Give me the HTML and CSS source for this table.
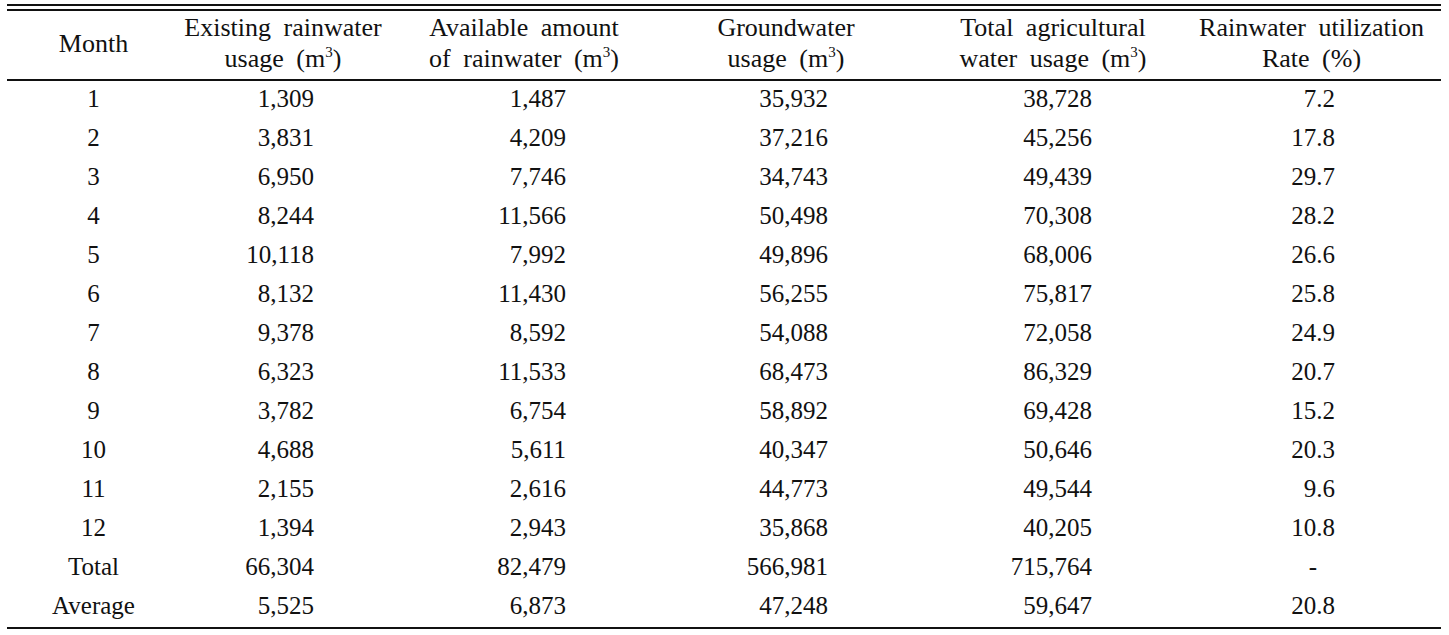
FILE: index.html
```html
<!DOCTYPE html>
<html lang="en">
<head>
<meta charset="utf-8">
<title>Monthly rainwater and groundwater usage</title>
<link rel="stylesheet" href="styles.css">
</head>
<body>
<div class="sheet">
<table class="data">
  <colgroup>
    <col class="c1"><col class="c2"><col class="c3"><col class="c4"><col class="c5"><col class="c6">
  </colgroup>
  <thead>
    <tr>
      <th>Month</th>
      <th>Existing rainwater<br>usage (m<sup>3</sup>)</th>
      <th>Available amount<br>of rainwater (m<sup>3</sup>)</th>
      <th>Groundwater<br>usage (m<sup>3</sup>)</th>
      <th>Total agricultural<br>water usage (m<sup>3</sup>)</th>
      <th class="h6">Rainwater utilization<br>Rate (%)</th>
    </tr>
  </thead>
  <tbody>
    <tr><td>1</td><td>1,309</td><td>1,487</td><td>35,932</td><td>38,728</td><td>7.2</td></tr>
    <tr><td>2</td><td>3,831</td><td>4,209</td><td>37,216</td><td>45,256</td><td>17.8</td></tr>
    <tr><td>3</td><td>6,950</td><td>7,746</td><td>34,743</td><td>49,439</td><td>29.7</td></tr>
    <tr><td>4</td><td>8,244</td><td>11,566</td><td>50,498</td><td>70,308</td><td>28.2</td></tr>
    <tr><td>5</td><td>10,118</td><td>7,992</td><td>49,896</td><td>68,006</td><td>26.6</td></tr>
    <tr><td>6</td><td>8,132</td><td>11,430</td><td>56,255</td><td>75,817</td><td>25.8</td></tr>
    <tr><td>7</td><td>9,378</td><td>8,592</td><td>54,088</td><td>72,058</td><td>24.9</td></tr>
    <tr><td>8</td><td>6,323</td><td>11,533</td><td>68,473</td><td>86,329</td><td>20.7</td></tr>
    <tr><td>9</td><td>3,782</td><td>6,754</td><td>58,892</td><td>69,428</td><td>15.2</td></tr>
    <tr><td>10</td><td>4,688</td><td>5,611</td><td>40,347</td><td>50,646</td><td>20.3</td></tr>
    <tr><td>11</td><td>2,155</td><td>2,616</td><td>44,773</td><td>49,544</td><td>9.6</td></tr>
    <tr><td>12</td><td>1,394</td><td>2,943</td><td>35,868</td><td>40,205</td><td>10.8</td></tr>
    <tr><td>Total</td><td>66,304</td><td>82,479</td><td>566,981</td><td>715,764</td><td class="dash">-</td></tr>
    <tr class="last"><td>Average</td><td>5,525</td><td>6,873</td><td>47,248</td><td>59,647</td><td>20.8</td></tr>
  </tbody>
</table>
</div>
</body>
</html>
```
FILE: styles.css
```css
html, body {
  margin: 0;
  padding: 0;
  background: #ffffff;
}

.sheet {
  margin: 4px 0 0 7px;
  width: 1434px;
  border-top: 2px solid #111;
  padding-top: 3px;
}

.data {
  width: 1434px;
  table-layout: fixed;
  border-collapse: separate;
  border-spacing: 0;
  border-top: 2px solid #111;
  font-family: "Liberation Serif", "Times New Roman", serif;
  font-size: 25px;
  color: #111;
}

.c1 { width: 173px; }
.c2 { width: 206px; }
.c3 { width: 276px; }
.c4 { width: 248px; }
.c5 { width: 286px; }
.c6 { width: 245px; }

.data th {
  font-weight: normal;
  font-size: 26px;
  line-height: 31px;
  height: 64px;
  padding: 0 0 4px 0;
  text-align: center;
  vertical-align: middle;
  word-spacing: 6px;
  border-bottom: 2px solid #111;
}

.data th.h6 {
  padding-right: 14px;
}

.data sup {
  font-size: 15px;
  line-height: 0;
  vertical-align: 10px;
}

.data tbody tr {
  height: 39px;
}

.data td {
  padding: 0 0 3px 0;
  height: 36px;
  line-height: 30px;
  text-align: right;
  vertical-align: middle;
  white-space: nowrap;
}

.data td:nth-child(1) { text-align: center; }
.data td:nth-child(2) { padding-right: 72px; }
.data td:nth-child(3) { padding-right: 96px; }
.data td:nth-child(4) { padding-right: 82px; }
.data td:nth-child(5) { padding-right: 104px; }
.data td:nth-child(6) { padding-right: 106px; }
.data td.dash { text-align: right; padding-right: 124px; }

.data tr.last td {
  border-bottom: 2px solid #111;
}
```
